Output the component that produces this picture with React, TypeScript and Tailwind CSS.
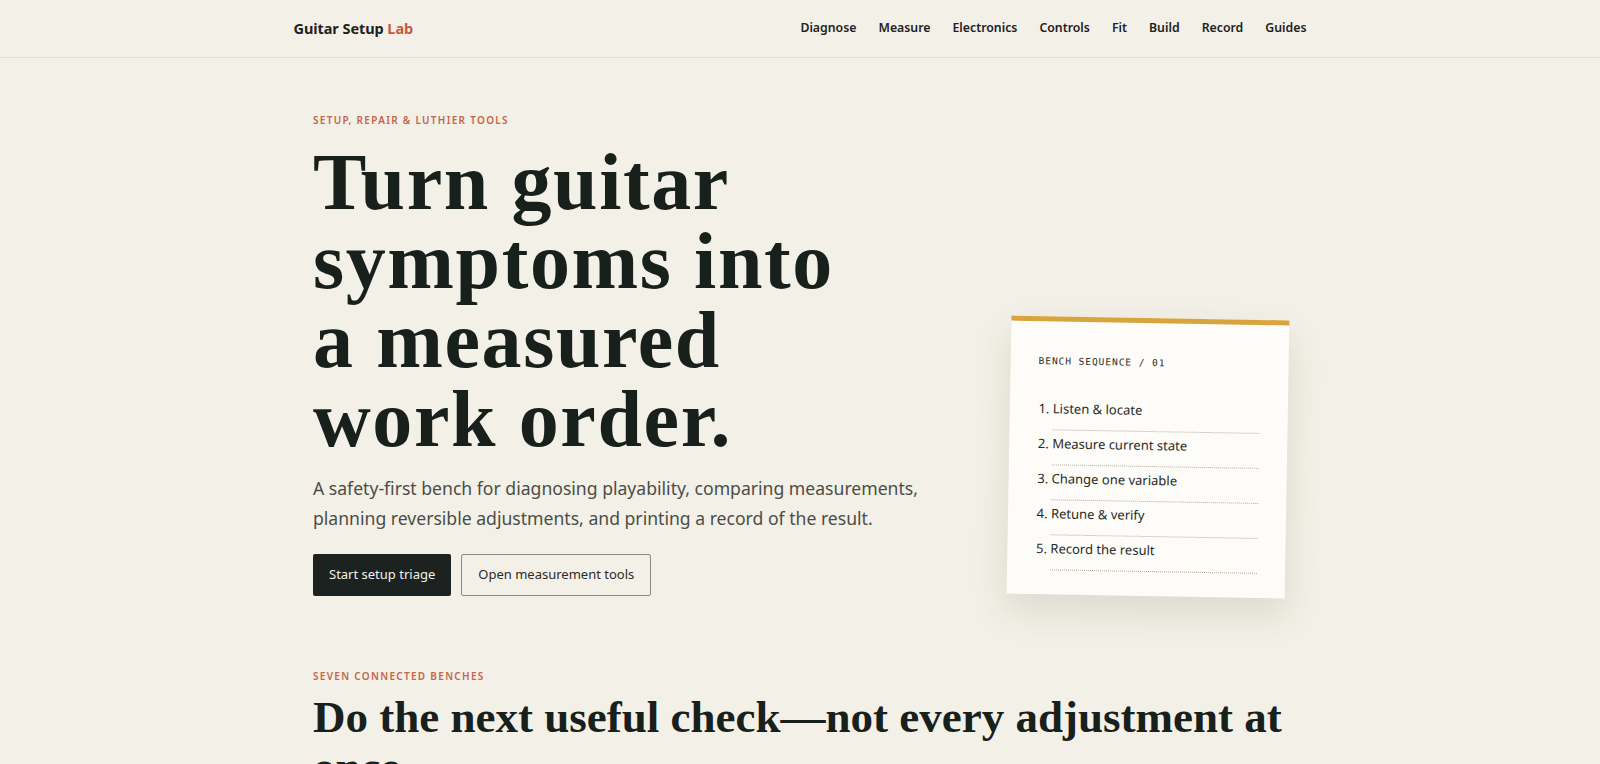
const navLinks = ['Diagnose', 'Measure', 'Electronics', 'Controls', 'Fit', 'Build', 'Record', 'Guides'];

const steps = ['Listen & locate', 'Measure current state', 'Change one variable', 'Retune & verify', 'Record the result'];

const sans = "font-['Noto_Sans',_'Open_Sans',_sans-serif]";
const serif = "font-['Liberation_Serif',_'Times_New_Roman',_serif]";

function Header() {
  return (
    <header className="border-b border-[#e2ded1]">
      <div className="mx-auto flex h-[57px] max-w-[1013px] items-center justify-between">
        <a className="text-[14.5px] font-bold tracking-[-0.005em] text-[#1d221f]">
          Guitar Setup <span className="text-[#c8583f]">Lab</span>
        </a>
        <nav className="flex items-center gap-[22px] text-[12.3px] font-semibold text-[#1d221f]">
          {navLinks.map((link) => (
            <a key={link}>{link}</a>
          ))}
        </nav>
      </div>
    </header>
  );
}

function BenchCard() {
  return (
    <div className="w-[278px] rotate-[1deg] border-t-[5px] border-[#d9a43e] bg-[#fdfcf8] px-[28px] pb-[24px] pt-[33px] shadow-[0_16px_36px_rgba(70,58,30,0.13)]">
      <div className="font-['DejaVu_Sans_Mono',_monospace] text-[9.5px] leading-[14px] tracking-[0.1em] text-[#2b2e2b]">
        BENCH SEQUENCE / 01
      </div>
      <ol className="mt-[27px] list-outside list-decimal pl-[15px] text-[13px] text-[#262a27]">
        {steps.map((step) => (
          <li key={step} className="border-b border-dotted border-[#b5b0a3] pb-[11px] pt-[3px] leading-[20px]">
            {step}
          </li>
        ))}
      </ol>
    </div>
  );
}

export default function App() {
  return (
    <div className={`min-h-screen bg-[#f3f0e7] text-[#1a201c] ${sans}`}>
      <Header />
      <main className="mx-auto max-w-[974px]">
        {/* Hero */}
        <section className="grid grid-cols-[1fr_278px] items-end pt-[54px]">
          <div>
            <p className="text-[10px] font-semibold uppercase leading-[16px] tracking-[0.13em] text-[#c4664a]">
              Setup, repair &amp; luthier tools
            </p>
            <h1 className={`mt-[15px] text-[80px] font-bold leading-[79px] tracking-[0.02em] text-[#18201c] ${serif}`}>
              Turn guitar
              <br />
              symptoms into
              <br />
              a measured
              <br />
              work order.
            </h1>
            <p className="mt-[14px] text-[17.6px] leading-[30px] text-[#4b4d48]">
              A safety-first bench for diagnosing playability, comparing measurements,
              <br />
              planning reversible adjustments, and printing a record of the result.
            </p>
            <div className="mt-[21px] flex gap-[10px]">
              <button className="h-[42px] rounded-[2px] bg-[#1b221f] px-4 text-[13px] text-[#f4f1ea]">
                Start setup triage
              </button>
              <button className="h-[42px] rounded-[2px] border border-[#8e8a83] px-4 text-[13px] text-[#2a2c29]">
                Open measurement tools
              </button>
            </div>
          </div>
          <BenchCard />
        </section>

        {/* Benches */}
        <section className="mt-[72px]">
          <p className="text-[10px] font-semibold uppercase leading-[16px] tracking-[0.13em] text-[#c4664a]">
            Seven connected benches
          </p>
          <h2 className={`mt-[9px] w-[1000px] text-[45px] font-bold leading-[1.1] text-[#18201c] ${serif}`}>
            Do the next useful check—not every adjustment at once.
          </h2>
        </section>
      </main>
    </div>
  );
}
